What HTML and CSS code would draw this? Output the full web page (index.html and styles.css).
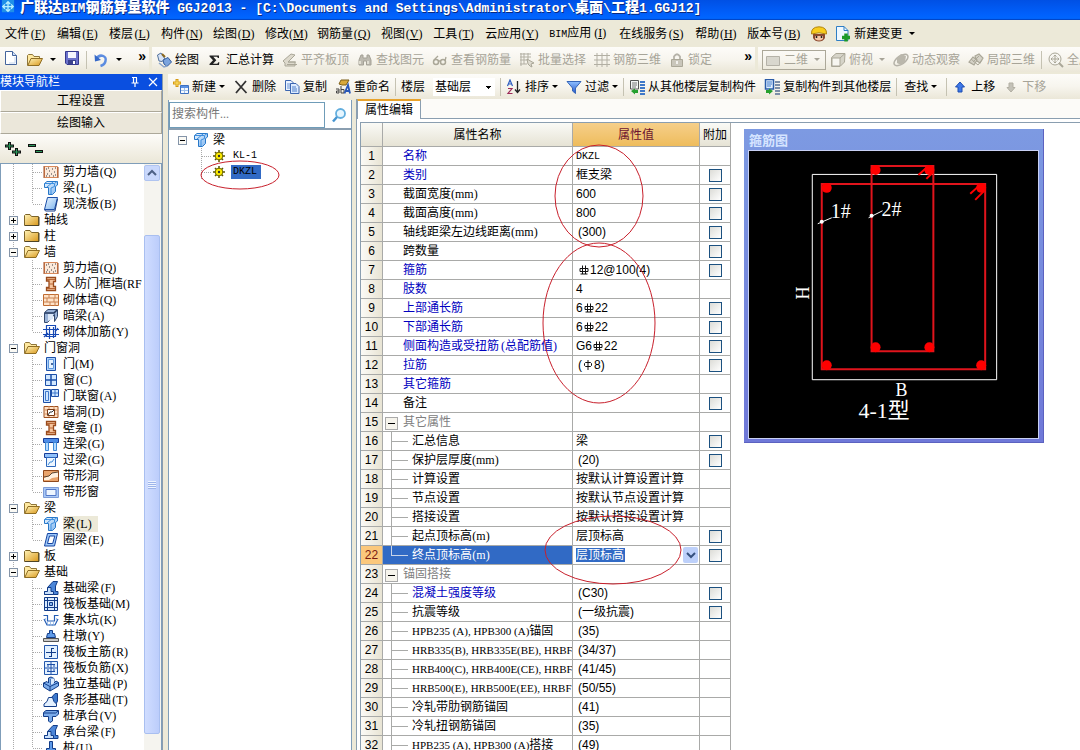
FILE: index.html
```html
<!DOCTYPE html>
<html lang="zh-CN">
<head>
<meta charset="utf-8">
<title>广联达BIM钢筋算量软件 GGJ2013</title>
<link rel="stylesheet" href="styles.css">
</head>
<body>
<svg class="defs" aria-hidden="true">
  <defs>
    <linearGradient id="gFold" x1="0" y1="0" x2="1" y2="1"><stop offset="0" stop-color="#fff3b8"/><stop offset="1" stop-color="#d9981c"/></linearGradient>
    <linearGradient id="gBlue" x1="0" y1="0" x2="1" y2="1"><stop offset="0" stop-color="#eaf5ff"/><stop offset="1" stop-color="#7db4ee"/></linearGradient>
    <linearGradient id="gDeep" x1="0" y1="0" x2="0" y2="1"><stop offset="0" stop-color="#8fc0ff"/><stop offset="1" stop-color="#2456c8"/></linearGradient>
  </defs>
  <symbol id="folder" viewBox="0 0 16 16"><path d="M.5 13.500V3.500L1.500 2.500H6L7.500 4.500H14.500V13.500Z" fill="url(#gFold)" stroke="#7d6428"/><path d="M1 13.500H15V5" fill="none" stroke="#4f4526"/></symbol>
  <symbol id="open" viewBox="0 0 16 16"><path d="M.5 13.500V3.500L1.500 2.500H5.500L7 4.500H12.500V6.500" fill="#ffe9a0" stroke="#8f763a"/><path d="M.8 13.500L4 6.500H15.500L12 13.500Z" fill="url(#gFold)" stroke="#8f6d22"/></symbol>
  <symbol id="wallQ" viewBox="0 0 16 16"><path d="M1.500 2.500H14.500V13.500H1.500Z" fill="#fbe9da" stroke="#d88a5c"/><path d="M1 2V14M15 3V14" stroke="#a04a20"/><path d="M3 5h1M6 7h1M9 5h1M11 8h1M4 10h1M8 10h1M12 11h1M6 12h1M3 12h1M10 12h1M5 4h1M12 4h1" stroke="#34343c"/></symbol>
  <symbol id="beam" viewBox="0 0 16 16"><path d="M1.500 3.500L4 1.500H14.500V5L12.500 6.500V11.500L9.500 14.500H5.500V7.500H1.500Z" fill="url(#gBlue)" stroke="#2878c8"/><path d="M1.500 3.500H11.500L14 1.500M11.500 4V6.500L8 8V14M4 7L10 2" fill="none" stroke="#3d8fe0"/></symbol>
  <symbol id="slab" viewBox="0 0 16 16"><path d="M4.500 1.500H14.500L11.500 13.500H1.500Z" fill="url(#gBlue)" stroke="#1c4fa8"/><path d="M1.500 13.500L2.500 15H12L14.500 3" fill="none" stroke="#173d88"/></symbol>
  <symbol id="ring" viewBox="0 0 16 16"><path d="M4.500 1.500H14.500L11.500 14H1.500Z" fill="#9cc8fa" stroke="#1644a0"/><path d="M6.500 4H11.800L9.700 11.500H4.500Z" fill="#fff" stroke="#1644a0"/></symbol>
  <symbol id="frameI" viewBox="0 0 16 16"><path d="M3.500 1.500H12.500V5.500H10.500V10.500H12.500V14.500H3.500V11.500H6V5H3.500Z" fill="#f6c49c" stroke="#9a4b1d" stroke-width="1.300"/><path d="M6 8h4M4 3.500h8M4 12.500h8" stroke="#b76534"/></symbol>
  <symbol id="brick" viewBox="0 0 16 16"><path d="M.5 2.500H15.500V13.500H.5Z" fill="#ffe3c8" stroke="#c06c32"/><path d="M1 6H15M1 10H15M6 2V6M11 6V10M4 6V10M7 10V14M12 2V6M12 10V14" stroke="#c98253"/></symbol>
  <symbol id="hidden" viewBox="0 0 16 16"><path d="M1.500 4.500L5 1.500H14.500V8.500L11.500 13.500V6.500L4.500 14.500H1.500Z" fill="#9ab3d8" stroke="#33486c"/><path d="M2 5H11L14 2" fill="none" stroke="#22375c" stroke-width="1.500"/><path d="M5 6H10V11L5 13Z" fill="#dce8f8"/></symbol>
  <symbol id="rebarY" viewBox="0 0 16 16"><path d="M3.500 1.500H12.500V12.500H3.500ZM0 5.500H16M0 10.500H16M6.500 3V15M10.500 3V14M1 13L5 9M12 8L15 4" fill="none" stroke="#1749b4" stroke-width="1.200"/></symbol>
  <symbol id="door" viewBox="0 0 16 16"><path d="M3.500 1.500H12.500V14.500H3.500Z" fill="#aed2fa" stroke="#1c4fa8"/><path d="M5.500 3.500H10.500V12.500H5.500Z" fill="#e4f2ff" stroke="#5e98de"/><path d="M9 7v2" stroke="#143c80" stroke-width="1.500"/></symbol>
  <symbol id="window" viewBox="0 0 16 16"><path d="M2.500 2.500H13.500V13.500H2.500Z" fill="#d2e8ff" stroke="#1c4fa8"/><path d="M8 3V13M3 8H13" stroke="#1c4fa8" stroke-width="1.500"/></symbol>
  <symbol id="doorwin" viewBox="0 0 16 16"><path d="M.5 1.500H7.500V14.500H.5ZM8.500 1.500H15.500V8.500H8.500Z" fill="#cfe6ff" stroke="#1c4fa8"/><path d="M12 2V8M9 5H15M2.500 3.500H5.500V12.500H2.500Z" fill="none" stroke="#3f78cc"/></symbol>
  <symbol id="hole" viewBox="0 0 16 16"><path d="M1 2.500H15V13.500H1Z" fill="#ffe0c4" stroke="#a0501e"/><path d="M1 6H15M1 10H15M6 2V13M11 2V13" stroke="#cf8f62"/><path d="M4.500 5.500H11.500V11.500H4.500Z" fill="#fff" stroke="#7a3a14"/><path d="M5 11L7 8L9 8L11 6" fill="none" stroke="#333"/></symbol>
  <symbol id="lianl" viewBox="0 0 16 16"><path d="M.5 2.500H15.500V6.500H.5Z" fill="#4d8de8" stroke="#173d98"/><path d="M2.500 6.500H5.500V14.500H2.500ZM10.500 6.500H13.500V14.500H10.500Z" fill="#b6dbff" stroke="#3f8bd8"/></symbol>
  <symbol id="guol" viewBox="0 0 16 16"><path d="M1.500 1.500H14.500V5.500H1.500Z" fill="#8fc0fa" stroke="#173d98"/><path d="M3.500 5.500H12.500V14.500H3.500Z" fill="#edf6ff" stroke="#2d68bc"/><path d="M5 13L7 10H9L11 7" fill="none" stroke="#3f8bd8"/></symbol>
  <symbol id="striphole" viewBox="0 0 16 16"><path d="M.5 2.500H15.500V13.500H.5Z" fill="#e9a46c" stroke="#8f481c"/><path d="M1 10L6 8L9 5L15 4V9L9 10L6 12H1Z" fill="#fff1e0"/><path d="M1 9L6 8L9 5L15 4" fill="none" stroke="#5c4632"/></symbol>
  <symbol id="stripwin" viewBox="0 0 16 16"><path d="M.5 3.500H15.500V13.500H.5Z" fill="#a9c9f7" stroke="#7d9cd8"/><path d="M3 5.500H13V11.500H3Z" fill="#eef6ff" stroke="#5277c8"/></symbol>
  <symbol id="foundF" viewBox="0 0 16 16"><path d="M1.500 14.500V11.500H4.500V7.500L10 1.500H14.500L12.500 6V11.500H15V14.500Z" fill="#4c86d8" stroke="#123c88"/><path d="M1.500 14.500V11.500H4.500V7.500H8V11.500H10.500V14.500Z" fill="#c8e0fc" stroke="#123c88"/></symbol>
  <symbol id="raft" viewBox="0 0 16 16"><path d="M1.500 1.500H14.500V14.500H1.500Z" fill="#d9ebff" stroke="#123c88"/><path d="M4.500 1V15M11.500 1V15M1 4.500H15M1 11.500H15" stroke="#123c88"/><path d="M6.500 6.500H9.500V9.500H6.500Z" fill="#86b7f2" stroke="#123c88"/></symbol>
  <symbol id="pit" viewBox="0 0 16 16"><path d="M.5 3.500H4.500V9H11.500V3.500H15.500M1 7L4 13H12L15 7" fill="none" stroke="#235cb4" stroke-width="1.200"/><path d="M4 11h1M7 11h1M10 11h1M2 7h1M13 7h1M6 13h1M9 13h1" stroke="#4f8fe0"/></symbol>
  <symbol id="pier" viewBox="0 0 16 16"><path d="M6.500 2.500H9.500V5.500H11.500L12.500 9.500H3.500L4.500 5.500H6.500Z" fill="#5f9be8" stroke="#123c88"/><path d="M.5 10.500H15.500V13.500H.5Z" fill="#c9c9c9" stroke="#555"/></symbol>
  <symbol id="barR" viewBox="0 0 16 16"><path d="M1.500 1.500H14.500V14.500H1.500Z" fill="#e3f1ff" stroke="#2558ac"/><path d="M8.500 4V12M3 8.500H13M8 4.500H11M6 12.500H9" fill="none" stroke="#123c88"/></symbol>
  <symbol id="barX" viewBox="0 0 16 16"><path d="M1.500 1.500H14.500V14.500H1.500Z" fill="#e3f1ff" stroke="#2558ac"/><path d="M8 2V14M2 8H14M4 4.500H12M4 11.500H12M5 4V7M11 4V7M5 9V12M11 9V12" stroke="#1c4fa8"/></symbol>
  <symbol id="solo" viewBox="0 0 16 16"><path d="M.5 7L4 5.500L5.500 7V2L8 1L11 2.500V7L13 5L15.500 6.500V10L7 15L.5 11Z" fill="#7aabea" stroke="#123c88"/><path d="M.5 7L7 10.500L15.500 6.500M7 10.500V15M8 3V9" fill="none" stroke="#123c88"/><path d="M8 3L11 2.500V7L8 9Z" fill="#dcecff"/></symbol>
  <symbol id="stripF" viewBox="0 0 16 16"><path d="M8 6L12 1.500H14.500V9L12 14Z" fill="#3c78cc" stroke="#123c88"/><path d="M1 14.500V12L4 9.500L5.500 5.500H9.500L11 9.500L13.500 12V14.500Z" fill="#e4f1ff" stroke="#123c88"/></symbol>
  <symbol id="cap" viewBox="0 0 16 16"><path d="M.5 4.500L3 2.500H15.500V6L13 8.500H9.500V13L7 14.500L5.500 13V8.500H.5Z" fill="#7aabea" stroke="#123c88"/><path d="M1 5H12.500L15 3" fill="none" stroke="#123c88"/></symbol>
  <symbol id="pile" viewBox="0 0 16 16"><path d="M6.500 1.500H9.500V8.500H12.500V12.500H3.500V8.500H6.500Z" fill="#5f9be8" stroke="#123c88"/><path d="M4 15h8" stroke="#123c88"/></symbol>
  <symbol id="gear" viewBox="0 0 12 12"><path d="M6 0V12M0 6H12M2 2L10 10M10 2L2 10" stroke="#5c5600" stroke-width="1.500"/><circle cx="6" cy="6" r="3.800" fill="#ffee00" stroke="#6d6600"/><circle cx="6" cy="6" r="1.200" fill="#333"/></symbol>
  <symbol id="new" viewBox="0 0 16 16"><path d="M2.500 1.500H9.500L13.500 5.500V14.500H2.500Z" fill="#fff" stroke="#44649c"/><path d="M9.500 1.500V5.500H13.500" fill="#cfe0f8" stroke="#44649c"/><path d="M12 7V13H6" fill="none" stroke="#c5d5ee"/></symbol>
  <symbol id="save" viewBox="0 0 16 16"><path d="M1.500 1.500H14.500V14.500H3L1.500 13Z" fill="#6c72cc" stroke="#34388e"/><path d="M4 2H12V8H4Z" fill="#f4f6ff"/><path d="M4 10H12V14H4Z" fill="#3c428e"/><path d="M9 11H11V14H9Z" fill="#fff"/></symbol>
  <symbol id="undo" viewBox="0 0 16 16"><path d="M3 7C7 1 14 4 12.500 9C12 12 9 13.500 7.500 14" fill="none" stroke="#5c8ce0" stroke-width="2.500"/><path d="M1.500 2.500L2 9.500L8 8Z" fill="#3568c8"/></symbol>
  <symbol id="paint" viewBox="0 0 16 16"><path d="M1.500 3L5 1L9 7L6 9.500L3 9Z" fill="#d8e4f6" stroke="#53729c"/><path d="M6 2L9 5" stroke="#8d681d" stroke-width="2"/><path d="M7 8L12 5.500L15.500 10L11 14.500L8 12Z" fill="#7ba4de" stroke="#355c9c"/><path d="M3 11L8 15L11 14" fill="none" stroke="#8ba5ca" stroke-width="1.500"/></symbol>
  <symbol id="sigma" viewBox="0 0 16 16"><path d="M2.500 3.500H12V6H11L10 4.800H6.300L9.300 8.300L6 11.700H10.300L11.300 10.300H12.300L12 13H2.500V12L6 8.300L2.500 4.500Z" fill="#222"/></symbol>
  <symbol id="level" viewBox="0 0 16 16"><path d="M1 9L9 2L13 3L6 10H13V14H3V11Z" fill="#ddd9cc" stroke="#aaa798"/><path d="M5 12.500H15M6 10H14" stroke="#aaa798"/></symbol>
  <symbol id="bino" viewBox="0 0 16 16"><path d="M2 13V8L4 3H6V6H10V3H12L14 8V13H9.500V9H6.500V13Z" fill="#bdbab0" stroke="#a4a196"/><path d="M3 9V12M11 9V12" stroke="#eceade" stroke-width="1.500"/></symbol>
  <symbol id="glass" viewBox="0 0 16 16"><circle cx="4" cy="10" r="2.500" fill="none" stroke="#aaa798" stroke-width="1.500"/><circle cx="11" cy="10" r="2.500" fill="none" stroke="#aaa798" stroke-width="1.500"/><path d="M6 9L9 9M2 8L6 4M13 9L14 5" stroke="#aaa798" stroke-width="1.300"/></symbol>
  <symbol id="grid" viewBox="0 0 16 16"><path d="M3 1V15M8 1V15M13 1V15M0 3.500H16M0 8H16M0 12.500H16" stroke="#b2afa3"/></symbol>
  <symbol id="batch" viewBox="0 0 16 16"><path d="M1 2H12M1 5H12M1 8H8M2 1V14M5 1V12M9 1V9M1 12H8" stroke="#b2afa3"/><path d="M8 7L15 11L12 12L13 15L11 14L9 12Z" fill="#dedbd0" stroke="#aaa798"/></symbol>
  <symbol id="lock" viewBox="0 0 16 16"><path d="M5 8V4.500Q8 0 11 4.500V8" fill="none" stroke="#b5b2a8" stroke-width="1.800"/><path d="M2.500 7.500H13.500V14.500H2.500Z" fill="#c9c6bb" stroke="#aaa798"/><path d="M8 9V12" stroke="#fff" stroke-width="1.500"/></symbol>
  <symbol id="flat" viewBox="0 0 16 16"><path d="M1.500 4.500H14.500V13.500H1.500Z" fill="#d9d7ce" stroke="#b5b2a8"/></symbol>
  <symbol id="cube" viewBox="0 0 16 16"><path d="M1.500 5.500L6 1.500H15L14.500 10L10 14.500H1.500Z" fill="#d6d4c9" stroke="#aaa798"/><path d="M2 6H10V14H2Z" fill="#f7f6f1" stroke="#aaa798"/><path d="M10 6L15 1.500" stroke="#aaa798"/></symbol>
  <symbol id="orbit" viewBox="0 0 16 16"><ellipse cx="8" cy="8" rx="8" ry="4" fill="none" stroke="#b5b2a8" stroke-width="1.500" transform="rotate(-35 8 8)"/><path d="M4 6L8 2L13 4L12 10L8 13L4 11Z" fill="#bab7ac"/></symbol>
  <symbol id="local" viewBox="0 0 16 16"><path d="M1 10L5 5L9 8L6 13ZM7 4L11 2L15 6L12 11L9 9Z" fill="#d5d2c7" stroke="#aaa798" stroke-width="1.200"/><path d="M3 7L10 13L14 8M5 10L11 4" stroke="#aaa798" fill="none"/></symbol>
  <symbol id="full" viewBox="0 0 16 16"><circle cx="7" cy="7" r="6" fill="#f7f6f1" stroke="#aaa798"/><path d="M7 3V11M3 7H11M5.500 4.500L7 3L8.500 4.500M5.500 9.500L7 11L8.500 9.500M4.500 5.500L3 7L4.500 8.500M9.500 5.500L11 7L9.500 8.500" stroke="#aaa798" fill="none"/><path d="M11 11L15 15" stroke="#aaa798" stroke-width="2"/></symbol>
  <symbol id="newitem" viewBox="0 0 16 16"><path d="M4 0V8M0 4H8" stroke="#d59a12" stroke-width="3"/><path d="M4 1V7M1 4H7" stroke="#ffe46a"/><path d="M7.500 6.500H15.500V14.500H7.500Z" fill="#f4f9ff" stroke="#3c70c0"/><path d="M8 8H15" stroke="#5a91e4" stroke-width="2"/><path d="M8 11.500H15M11.500 9V14" stroke="#9fc0ea"/></symbol>
  <symbol id="del" viewBox="0 0 16 16"><path d="M2.500 2L13.500 14M13 2L3 14" stroke="#333" stroke-width="1.800"/></symbol>
  <symbol id="copy" viewBox="0 0 16 16"><path d="M1.500 1.500H7L9.500 4V11.500H1.500Z" fill="#eaf3ff" stroke="#3c66b0"/><path d="M3 5H7M3 7H7M3 9H7" stroke="#6a94d4"/><path d="M6.500 4.500H12L15 7.500V14.500H6.500Z" fill="#dcebff" stroke="#3c66b0"/><path d="M8 8H12M8 10H13M8 12H13" stroke="#4f7fc8"/></symbol>
  <symbol id="rename" viewBox="0 0 16 16"><path d="M4 5L6 1H14L11 6H7Z" fill="#d9a93a" stroke="#7d5e18"/><path d="M1 10H4V14H1.500V12H4M6 7V14H9V10.500H6" fill="none" stroke="#444"/><path d="M9.500 14.500L13 6L15 14.500M11 12H15" fill="none" stroke="#2a58b8" stroke-width="1.800"/></symbol>
  <symbol id="sort" viewBox="0 0 16 16"><path d="M1.500 7L4 1L6.500 7M2.500 5H5.500" fill="none" stroke="#2c5cc0" stroke-width="1.200"/><path d="M2 9.500H6L2 14.500H6.500" fill="none" stroke="#9c2a58" stroke-width="1.200"/><path d="M11.500 2V13M9 10.500L11.500 13.500L14 10.500" fill="none" stroke="#222" stroke-width="1.300"/></symbol>
  <symbol id="filter" viewBox="0 0 16 16"><path d="M1 2.500H15L9.500 9V14.500L6.500 12V9Z" fill="url(#gDeep)" stroke="#3565b8"/></symbol>
  <symbol id="from" viewBox="0 0 16 16"><path d="M1.500 1.500H9.500V10H1.500Z" fill="#f5f5f5" stroke="#555"/><path d="M3 4H8M3 6H8M3 8H7" stroke="#777"/><path d="M2 12L6 9.500V11H9V14H6V15.500Z" fill="#26a02e"/><path d="M11 3H16M11 6H16M11 9H16M11 12H16M11 15H16" stroke="#3f78c8" stroke-width="2"/></symbol>
  <symbol id="to" viewBox="0 0 16 16"><path d="M1.500 .5H9.500V10H1.500Z" fill="#e2efff" stroke="#2b5ca8" stroke-width="1.500"/><path d="M3 3H8M3 5H8M3 7H7" stroke="#3f78c8"/><path d="M9 12L5 9.500V11H2V14H5V15.500Z" fill="#26a02e"/><path d="M11 3H16M11 6H16M11 9H16M11 12H16M11 15H16" stroke="#7c8ea8" stroke-width="2"/></symbol>
  <symbol id="up" viewBox="0 0 16 16"><path d="M8 3L12.500 8H10V13H6V8H3.500Z" fill="#3d78e8" stroke="#1c4cb0"/></symbol>
  <symbol id="down" viewBox="0 0 16 16"><path d="M8 13L12 8.500H10V4H6V8.500H4Z" fill="#c4c2b8" stroke="#b2afa3"/></symbol>
  <symbol id="face" viewBox="0 0 16 16"><path d="M2 8H14V12Q12 15.500 8 15.500Q4 15.500 2 12Z" fill="#8c4a30"/><path d="M4 10H12V13Q8 16 4 13Z" fill="#f5c8a8"/><path d="M5.500 10v2M10.500 10v2" stroke="#222" stroke-width="1.500"/><path d="M.5 8Q0 1 8 .8Q16 1 15.500 8Q8 5.500 .5 8Z" fill="#f8cc1c" stroke="#b08410"/></symbol>
  <symbol id="change" viewBox="0 0 16 16"><path d="M1.500 .5H9L13 4.500V14.500H1.500Z" fill="#eef8ff" stroke="#2e7ec4"/><path d="M9 .5V4.500H13" fill="none" stroke="#2e7ec4"/><path d="M11 7.500V15.500M7 11.500H15" stroke="#1d9a28" stroke-width="3.500"/></symbol>
  <symbol id="search" viewBox="0 0 16 16"><circle cx="9.500" cy="6.500" r="4.500" fill="#e6f6ff" stroke="#62aede" stroke-width="1.800"/><path d="M6 10L2 14.500" stroke="#4795d0" stroke-width="2.500"/></symbol>
  <symbol id="rb" viewBox="0 0 10 10"><path d="M1 3.500H9V6.500H1ZM3.500 .5V9M6.500 .5V9M1.500 9H8.500" fill="none" stroke="#111"/></symbol>
  <symbol id="pb" viewBox="0 0 10 10"><path d="M2.500 2.500H7.500L8.500 3.500V5.500L7.500 6.500H2.500L1.500 5.500V3.500ZM5 0V10" fill="none" stroke="#111"/></symbol>
</svg>

<div class="app">
  <header class="title"><svg class="logo" viewBox="0 0 16 16"><path d="M1 0H15V14H1Z" fill="#1f8fe8"/><path d="M8 2V13M2 7.500H14M5.500 4.500L8 2L10.500 4.500M4.500 5L2 7.500L4.500 10M11.500 5L14 7.500L11.500 10M5.500 10.500L8 13L10.500 10.500" fill="none" stroke="#b8f0ff" stroke-width="1.500"/></svg><h1><b>广联达</b>BIM<b>钢筋算量软件</b> GGJ2013 - [C:\Documents and Settings\Administrator\<b>桌面</b>\<b>工程</b>1.GGJ12]</h1></header>

  <nav class="menu">
    <button>文件<span class="k">(<u>F</u>)</span></button><button>编辑<span class="k">(<u>E</u>)</span></button><button>楼层<span class="k">(<u>L</u>)</span></button><button>构件<span class="k">(<u>N</u>)</span></button><button>绘图<span class="k">(<u>D</u>)</span></button><button>修改<span class="k">(<u>M</u>)</span></button><button>钢筋量<span class="k">(<u>Q</u>)</span></button><button>视图<span class="k">(<u>V</u>)</span></button><button>工具<span class="k">(<u>T</u>)</span></button><button>云应用<span class="k">(<u>Y</u>)</span></button><button><span class="m">BIM</span>应用<span class="k">(<u>I</u>)</span></button><button>在线服务<span class="k">(<u>S</u>)</span></button><button>帮助<span class="k">(<u>H</u>)</span></button><button>版本号<span class="k">(<u>B</u>)</span></button>
    <svg class="ic"><use href="#face"/></svg>
    <button class="tb change"><svg class="ic"><use href="#change"/></svg>新建变更<i class="ar"></i></button>
  </nav>

  <div class="bars">
    <div class="strip file">
      <button aria-label="新建"><svg class="ic"><use href="#new"/></svg></button>
      <button class="tb" aria-label="打开"><svg class="ic"><use href="#open"/></svg><i class="ar"></i></button>
      <button aria-label="保存"><svg class="ic"><use href="#save"/></svg></button>
      <i class="sep"></i>
      <button class="tb" aria-label="撤销"><svg class="ic"><use href="#undo"/></svg><i class="ar"></i></button>
      <b class="more">»</b>
    </div>
    <div class="strip draw">
      <button class="tb"><svg class="ic"><use href="#paint"/></svg>绘图</button>
      <button class="tb"><svg class="ic"><use href="#sigma"/></svg>汇总计算</button>
      <button class="tb" disabled><svg class="ic"><use href="#level"/></svg>平齐板顶</button>
      <button class="tb" disabled><svg class="ic"><use href="#bino"/></svg>查找图元</button>
      <button class="tb" disabled><svg class="ic"><use href="#glass"/></svg>查看钢筋量</button>
      <button class="tb" disabled><svg class="ic"><use href="#batch"/></svg>批量选择</button>
      <button class="tb" disabled><svg class="ic"><use href="#grid"/></svg>钢筋三维</button>
      <button class="tb" disabled><svg class="ic"><use href="#lock"/></svg>锁定</button>
      <b class="more">»</b>
    </div>
    <div class="strip view">
      <button class="tb dim" disabled><svg class="ic"><use href="#flat"/></svg>二维<i class="ar"></i></button>
      <button class="tb" disabled><svg class="ic"><use href="#cube"/></svg>俯视<i class="ar"></i></button>
      <button class="tb" disabled><svg class="ic"><use href="#orbit"/></svg>动态观察</button>
      <button class="tb" disabled><svg class="ic"><use href="#local"/></svg>局部三维</button>
      <i class="sep"></i>
      <button class="tb" disabled><svg class="ic"><use href="#full"/></svg>全屏</button>
    </div>
  </div>

  <div class="main">
    <aside class="side">
      <div class="sidehead"><span>模块导航栏</span><svg class="pin" viewBox="0 0 32 12"><path d="M4 1.500H9M5.500 2V7M8.500 2V7M3.500 7H10.500M7 7V11" fill="none" stroke="#fff" stroke-width="1.200"/><path d="M21 2L29 10M29 2L21 10" stroke="#fff" stroke-width="1.200"/></svg></div>
      <button class="mod">工程设置</button>
      <button class="mod">绘图输入</button>
      <div class="pm"><svg viewBox="0 0 48 20"><path d="M9.500 3V11M5 7H14M16.500 9V17M12 13H21M28 6.500H36M35 12.500H43" stroke="#111" stroke-width="3"/><path d="M9.500 4V10M6 7H13M16.500 10V16M13 13H20M29 6.500H35M36 12.500H42" stroke="#2a9a5a"/></svg></div>
      <div class="treebox">
        <ul class="tree">
          <li><ul>
            <li><svg class="ic"><use href="#wallQ"/></svg>剪力墙<span class="k">(Q)</span></li>
            <li><svg class="ic"><use href="#beam"/></svg>梁<span class="k">(L)</span></li>
            <li><svg class="ic"><use href="#slab"/></svg>现浇板<span class="k">(B)</span></li>
          </ul></li>
          <li><div class="fold"><i class="ex plus"></i><svg class="ic"><use href="#folder"/></svg>轴线</div></li>
          <li><div class="fold"><i class="ex plus"></i><svg class="ic"><use href="#folder"/></svg>柱</div></li>
          <li><div class="fold"><i class="ex"></i><svg class="ic"><use href="#open"/></svg>墙</div><ul>
            <li><svg class="ic"><use href="#wallQ"/></svg>剪力墙<span class="k">(Q)</span></li>
            <li><svg class="ic"><use href="#frameI"/></svg>人防门框墙<span class="k">(RF</span></li>
            <li><svg class="ic"><use href="#brick"/></svg>砌体墙<span class="k">(Q)</span></li>
            <li><svg class="ic"><use href="#hidden"/></svg>暗梁<span class="k">(A)</span></li>
            <li><svg class="ic"><use href="#rebarY"/></svg>砌体加筋<span class="k">(Y)</span></li>
          </ul></li>
          <li><div class="fold"><i class="ex"></i><svg class="ic"><use href="#open"/></svg>门窗洞</div><ul>
            <li><svg class="ic"><use href="#door"/></svg>门<span class="k">(M)</span></li>
            <li><svg class="ic"><use href="#window"/></svg>窗<span class="k">(C)</span></li>
            <li><svg class="ic"><use href="#doorwin"/></svg>门联窗<span class="k">(A)</span></li>
            <li><svg class="ic"><use href="#hole"/></svg>墙洞<span class="k">(D)</span></li>
            <li><svg class="ic"><use href="#frameI"/></svg>壁龛<span class="k">(I)</span></li>
            <li><svg class="ic"><use href="#lianl"/></svg>连梁<span class="k">(G)</span></li>
            <li><svg class="ic"><use href="#guol"/></svg>过梁<span class="k">(G)</span></li>
            <li><svg class="ic"><use href="#striphole"/></svg>带形洞</li>
            <li><svg class="ic"><use href="#stripwin"/></svg>带形窗</li>
          </ul></li>
          <li><div class="fold"><i class="ex"></i><svg class="ic"><use href="#open"/></svg>梁</div><ul>
            <li><svg class="ic"><use href="#beam"/></svg><span class="cur">梁<span class="k">(L)</span></span></li>
            <li><svg class="ic"><use href="#ring"/></svg>圈梁<span class="k">(E)</span></li>
          </ul></li>
          <li><div class="fold"><i class="ex plus"></i><svg class="ic"><use href="#folder"/></svg>板</div></li>
          <li><div class="fold"><i class="ex"></i><svg class="ic"><use href="#open"/></svg>基础</div><ul>
            <li><svg class="ic"><use href="#foundF"/></svg>基础梁<span class="k">(F)</span></li>
            <li><svg class="ic"><use href="#raft"/></svg>筏板基础<span class="k">(M)</span></li>
            <li><svg class="ic"><use href="#pit"/></svg>集水坑<span class="k">(K)</span></li>
            <li><svg class="ic"><use href="#pier"/></svg>柱墩<span class="k">(Y)</span></li>
            <li><svg class="ic"><use href="#barR"/></svg>筏板主筋<span class="k">(R)</span></li>
            <li><svg class="ic"><use href="#barX"/></svg>筏板负筋<span class="k">(X)</span></li>
            <li><svg class="ic"><use href="#solo"/></svg>独立基础<span class="k">(P)</span></li>
            <li><svg class="ic"><use href="#stripF"/></svg>条形基础<span class="k">(T)</span></li>
            <li><svg class="ic"><use href="#cap"/></svg>桩承台<span class="k">(V)</span></li>
            <li><svg class="ic"><use href="#foundF"/></svg>承台梁<span class="k">(F)</span></li>
            <li><svg class="ic"><use href="#pile"/></svg>桩<span class="k">(U)</span></li>
          </ul></li>
        </ul>
        <div class="scroll"><button class="sb" aria-label="向上滚动"><svg viewBox="0 0 10 10"><path d="M1 7L5 3L9 7" fill="none" stroke="#4d6185" stroke-width="2"/></svg></button><div class="thumb"><i></i></div></div>
      </div>
    </aside>

    <div class="work">
      <div class="strip edit">
        <button class="tb"><svg class="ic"><use href="#newitem"/></svg>新建<i class="ar"></i></button>
        <button class="tb"><svg class="ic"><use href="#del"/></svg>删除</button>
        <button class="tb"><svg class="ic"><use href="#copy"/></svg>复制</button>
        <button class="tb"><svg class="ic"><use href="#rename"/></svg>重命名</button>
        <i class="sep"></i>
        <label for="floor">楼层</label>
        <select id="floor"><option>基础层</option></select>
        <i class="sep"></i>
        <button class="tb"><svg class="ic"><use href="#sort"/></svg>排序<i class="ar"></i></button>
        <button class="tb"><svg class="ic"><use href="#filter"/></svg>过滤<i class="ar"></i></button>
        <i class="sep"></i>
        <button class="tb"><svg class="ic"><use href="#from"/></svg>从其他楼层复制构件</button>
        <button class="tb"><svg class="ic"><use href="#to"/></svg>复制构件到其他楼层</button>
        <i class="sep"></i>
        <button class="tb find-btn">查找<i class="ar"></i></button>
        <i class="sep"></i>
        <button class="tb"><svg class="ic"><use href="#up"/></svg>上移</button>
        <button class="tb" disabled><svg class="ic"><use href="#down"/></svg>下移</button>
      </div>
      <div class="panes">
        <section class="list">
          <div class="find"><input type="text" placeholder="搜索构件..." aria-label="搜索构件"><button aria-label="搜索"><svg class="ic"><use href="#search"/></svg></button></div>
          <ul class="comp">
            <li class="top"><i class="ex"></i><svg class="ic"><use href="#beam"/></svg>梁</li>
            <li><svg class="gear"><use href="#gear"/></svg><span class="m">KL-1</span></li>
            <li><svg class="gear"><use href="#gear"/></svg><span class="m on">DKZL</span></li>
          </ul>
        </section>
        <section class="props">
          <div class="tabs"><button class="tab">属性编辑</button></div>
          <div class="content">
            <table>
              <colgroup><col class="c1"><col class="c2"><col class="c3"><col class="c4"></colgroup>
              <thead><tr><th></th><th>属性名称</th><th class="hot">属性值</th><th>附加</th></tr></thead>
              <tbody>
                <tr><th>1</th><td class="b">名称</td><td><span class="m">DKZL</span></td><td></td></tr>
                <tr><th>2</th><td class="b">类别</td><td>框支梁</td><td><input type="checkbox" aria-label="附加 类别"></td></tr>
                <tr><th>3</th><td>截面宽度<span class="u">(mm)</span></td><td>600</td><td><input type="checkbox" aria-label="附加 截面宽度"></td></tr>
                <tr><th>4</th><td>截面高度<span class="u">(mm)</span></td><td>800</td><td><input type="checkbox" aria-label="附加 截面高度"></td></tr>
                <tr><th>5</th><td>轴线距梁左边线距离<span class="u">(mm)</span></td><td class="p">(300)</td><td><input type="checkbox" aria-label="附加 轴线距离"></td></tr>
                <tr><th>6</th><td>跨数量</td><td></td><td><input type="checkbox" aria-label="附加 跨数量"></td></tr>
                <tr><th>7</th><td class="b">箍筋</td><td class="p"><svg class="rb"><use href="#rb"/></svg>12@100(4)</td><td><input type="checkbox" aria-label="附加 箍筋"></td></tr>
                <tr><th>8</th><td class="b">肢数</td><td>4</td><td></td></tr>
                <tr><th>9</th><td class="b">上部通长筋</td><td>6<svg class="rb"><use href="#rb"/></svg>22</td><td><input type="checkbox" aria-label="附加 上部通长筋"></td></tr>
                <tr><th>10</th><td class="b">下部通长筋</td><td>6<svg class="rb"><use href="#rb"/></svg>22</td><td><input type="checkbox" aria-label="附加 下部通长筋"></td></tr>
                <tr><th>11</th><td class="b">侧面构造或受扭筋<span class="w">(</span>总配筋值)</td><td>G6<svg class="rb"><use href="#rb"/></svg>22</td><td><input type="checkbox" aria-label="附加 侧面筋"></td></tr>
                <tr><th>12</th><td class="b">拉筋</td><td class="p">(<svg class="rb"><use href="#pb"/></svg>8)</td><td><input type="checkbox" aria-label="附加 拉筋"></td></tr>
                <tr><th>13</th><td class="b">其它箍筋</td><td></td><td></td></tr>
                <tr><th>14</th><td>备注</td><td></td><td><input type="checkbox" aria-label="附加 备注"></td></tr>
                <tr><th>15</th><td class="g"><i class="box"></i>其它属性</td><td></td><td></td></tr>
                <tr><th>16</th><td class="s">汇总信息</td><td>梁</td><td><input type="checkbox" aria-label="附加 汇总信息"></td></tr>
                <tr><th>17</th><td class="s">保护层厚度<span class="u">(mm)</span></td><td class="p">(20)</td><td><input type="checkbox" aria-label="附加 保护层厚度"></td></tr>
                <tr><th>18</th><td class="s">计算设置</td><td>按默认计算设置计算</td><td></td></tr>
                <tr><th>19</th><td class="s">节点设置</td><td>按默认节点设置计算</td><td></td></tr>
                <tr><th>20</th><td class="s">搭接设置</td><td>按默认搭接设置计算</td><td></td></tr>
                <tr><th>21</th><td class="s">起点顶标高<span class="k">(m)</span></td><td>层顶标高</td><td><input type="checkbox" aria-label="附加 起点顶标高"></td></tr>
                <tr class="sel"><th>22</th><td class="s">终点顶标高<span class="k">(m)</span></td><td><div class="edit-cell"><input type="text" value="层顶标高" aria-label="终点顶标高"><button aria-label="展开"><svg viewBox="0 0 10 10"><path d="M1 3L5 7L9 3" fill="none" stroke="#35507e" stroke-width="2"/></svg></button></div></td><td><input type="checkbox" aria-label="附加 终点顶标高"></td></tr>
                <tr><th>23</th><td class="g"><i class="box"></i>锚固搭接</td><td></td><td></td></tr>
                <tr><th>24</th><td class="s b">混凝土强度等级</td><td class="p">(C30)</td><td><input type="checkbox" aria-label="附加 混凝土强度等级"></td></tr>
                <tr><th>25</th><td class="s">抗震等级</td><td class="p">(一级抗震)</td><td><input type="checkbox" aria-label="附加 抗震等级"></td></tr>
                <tr><th>26</th><td class="s"><span class="n">HPB235 (A), HPB300 (A)</span>锚固</td><td class="p">(35)</td><td></td></tr>
                <tr><th>27</th><td class="s"><span class="n">HRB335(B), HRB335E(BE), HRBF</span></td><td class="p">(34/37)</td><td></td></tr>
                <tr><th>28</th><td class="s"><span class="n">HRB400(C), HRB400E(CE), HRBF</span></td><td class="p">(41/45)</td><td></td></tr>
                <tr><th>29</th><td class="s"><span class="n">HRB500(E), HRB500E(EE), HRBF</span></td><td class="p">(50/55)</td><td></td></tr>
                <tr><th>30</th><td class="s">冷轧带肋钢筋锚固</td><td class="p">(41)</td><td></td></tr>
                <tr><th>31</th><td class="s">冷轧扭钢筋锚固</td><td class="p">(35)</td><td></td></tr>
                <tr><th>32</th><td class="s"><span class="n">HPB235 (A), HPB300 (A)</span>搭接</td><td class="p">(49)</td><td></td></tr>
              </tbody>
            </table>
            <figure class="pic">
              <figcaption>箍筋图</figcaption>
              <svg viewBox="0 0 290 288">
                <path d="M63.500 23.500H248.500V229.500H63.500Z" fill="none" stroke="#fff"/>
                <path d="M73 33H237V219H73ZM123 15H185V201H123Z" fill="none" stroke="#e0141c" stroke-width="2"/>
                <g fill="#f00"><circle cx="78" cy="37" r="5"/><circle cx="233" cy="37" r="5"/><circle cx="78" cy="215" r="5"/><circle cx="233" cy="215" r="5"/><circle cx="127" cy="19" r="5"/><circle cx="181" cy="19" r="5"/><circle cx="127" cy="197" r="5"/><circle cx="181" cy="197" r="5"/></g>
                <path d="M233 33L222 43M237 39L227 49M180 15L170 24M185 21L178 28" stroke="#f00" stroke-width="2"/>
                <path d="M69 73L83 67M120 67L134 60" stroke="#fff"/><circle cx="73" cy="71" r="2" fill="#fff"/><circle cx="123" cy="65" r="2" fill="#fff"/>
                <g class="lab"><text x="82" y="67">1#</text><text x="133" y="65">2#</text><text class="dimb" x="147" y="246">B</text><text class="dimb" transform="translate(60 143) rotate(-90)" x="-6" y="0">H</text><text class="big" x="110" y="268">4-1型</text></g>
              </svg>
            </figure>
          </div>
        </section>
      </div>
    </div>
  </div>
  <svg class="marks" viewBox="0 0 1080 750" aria-hidden="true"><g fill="none" stroke="#c8202c"><ellipse cx="240" cy="175" rx="39" ry="14"/><ellipse cx="599" cy="196" rx="44" ry="51"/><ellipse cx="599" cy="323" rx="56" ry="80"/><ellipse cx="613" cy="550" rx="68" ry="34"/></g></svg>
</div>
</body>
</html>
```
FILE: styles.css
```css
* { box-sizing: border-box; }
body {
  margin: 0;
  background: #ece9d8;
  color: #000;
  font: 12px/16px "Liberation Serif", "Noto Sans CJK SC", sans-serif;
}
button, input, select { font: inherit; color: inherit; margin: 0; padding: 0; }
button { border: 0; background: none; white-space: nowrap; }
ul { list-style: none; margin: 0; padding: 0; }
.defs { position: absolute; width: 0; height: 0; }
.app { position: relative; height: 100vh; display: flex; flex-direction: column; overflow: hidden; }
.ic { width: 16px; height: 16px; flex: none; }
.k { display: inline-block; width: 18px; text-align: center; white-space: nowrap; }
.u { display: inline-block; width: 26px; text-align: right; }
.w { display: inline-block; width: 6px; text-align: right; }
.m { font-family: "Liberation Mono", monospace; font-size: 10px; }
.n { font-size: 11px; }

.title {
  display: flex; align-items: flex-start; gap: 4px; height: 20px; flex: none; overflow: hidden;
  background: linear-gradient(#0050e4, #0060fc 70%, #0066ff 92%, #0038b0);
}
.logo { width: 16px; height: 14px; flex: none; }
.title h1 { margin: 0; color: #fff; white-space: pre; font: bold 13px/16px "Liberation Mono", "Noto Sans CJK SC", monospace; text-shadow: 1px 1px #0a2a80; }
.title b { font-size: 14px; }

.menu { display: flex; align-items: center; height: 27px; flex: none; padding-left: 5px; gap: 10px; background: #ece9d8; }
.change { margin-left: -2px; }
.tb { display: flex; align-items: center; gap: 3px; }
.ar { width: 0; height: 0; border: 3px solid transparent; border-top-color: #000; border-bottom: 0; }
.menu .ar { margin-left: 4px; }
.sep { width: 1px; height: 18px; background: #c5c2b2; flex: none; }
button:disabled { color: #a7a498; }
button:disabled .ar { border-top-color: #a7a498; }

.bars { display: flex; height: 27px; flex: none; gap: 3px; }
.strip {
  display: flex; align-items: center; gap: 8px; height: 25px; white-space: nowrap;
  background: linear-gradient(#fdfcf9, #f7f5ee 50%, #ebe7d8);
}
.file { width: 149px; padding-left: 3px; flex: none; }
.file .sep { margin: 0 -2px; }
.file .ar { margin-left: 4px; }
.draw { width: 603px; padding-left: 4px; flex: none; }
.draw .tb { flex: none; }
.more { margin-left: auto; padding-right: 3px; font: bold 14px/18px "Liberation Sans", sans-serif; align-self: flex-start; }
.view { flex: 1; padding-left: 4px; min-width: 0; overflow: hidden; }
.view .tb { flex: none; }
.view .ar { margin-left: 3px; }
.view .dim { border: 1px solid #aca899; height: 20px; padding: 0 5px 0 2px; margin-right: -4px; }
.view .sep { margin: 0 -2px; }

.main { display: flex; flex: 1; min-height: 0; }
.side { width: 163px; flex: none; display: flex; flex-direction: column; border-right: 1px solid #8a9cae; }
.sidehead { display: flex; justify-content: space-between; align-items: center; height: 16px; flex: none; background: #0a4fe0; color: #fff; }
.pin { width: 32px; height: 12px; margin-right: 2px; }
.mod { height: 22px; flex: none; border: 1px solid; border-color: #fff #aca899 #aca899 #fff; background: #ebe7da; }
.pm { height: 29px; flex: none; background: linear-gradient(#fdfcf9, #ebe7d8); }
.pm svg { width: 48px; height: 20px; margin: 0; display: block; position: relative; top: 5px; }
.treebox { flex: 1; min-height: 0; display: flex; overflow: hidden; background: #fff; border: 1px solid #7f9db9; border-width: 1px 1px 0; }
.tree { flex: 1; min-width: 0; overflow: hidden; white-space: nowrap; background: repeating-linear-gradient(#aaa 0 1px, #fff 1px 2px) 12px 0 / 1px 100% no-repeat; }
.tree ul { background: repeating-linear-gradient(#aaa 0 1px, #fff 1px 2px) 31px 0 / 1px calc(100% - 8px) no-repeat; }
.tree ul li, .fold { display: flex; align-items: center; height: 16px; gap: 4px; }
.tree ul li { padding-left: 42px; background: repeating-linear-gradient(90deg, #aaa 0 1px, #fff 1px 2px) 32px 8px / 10px 1px no-repeat; }
.tree ul .k { margin-left: -4px; }
.tree .cur .k { margin-left: 0; }
.cur { background: #ece9d8; padding-right: 5px; }
.fold { padding-left: 8px; }
.fold .ex { margin-right: 2px; }
.ex { position: relative; width: 9px; height: 9px; border: 1px solid #8494a8; background: #fbfaf5; flex: none; }
.ex::before, .plus::after { content: ""; position: absolute; left: 1px; top: 3px; width: 5px; height: 1px; background: #000; }
.plus::after { left: 3px; top: 1px; width: 1px; height: 5px; }
.scroll { width: 17px; flex: none; background: #f5f4ef; padding: 1px 1px 16px 0; display: flex; flex-direction: column; }
.sb { height: 16px; flex: none; border: 1px solid #b0c4f0; border-radius: 2px; background: #c9d8fc; display: grid; place-items: center; }
.sb svg { width: 10px; height: 10px; }
.thumb { flex: 1; margin-top: 54px; border: 1px solid #a9bff0; border-radius: 2px; background: linear-gradient(90deg, #d0ddff, #bccdfb); display: grid; place-items: center; }
.thumb i { width: 8px; height: 8px; background: repeating-linear-gradient(#eef4ff 0 1px, #9db4ea 1px 2px); }

.work { flex: 1; min-width: 0; margin-left: 5px; display: flex; flex-direction: column; }
.edit { flex: none; padding-left: 5px; }
.edit .tb, .edit label { flex: none; }
.edit .sep { margin: 0 -3px; }
.find-btn { padding: 0 4px 0 2px; }
#floor { appearance: none; border: 0; border-radius: 0; width: 62px; height: 18px; padding-left: 2px; flex: none; background: #fff conic-gradient(from 315deg at 50% 100%, #000 90deg, #fff 0) 52px 8px / 6px 3px no-repeat; }
.panes { flex: 1; min-height: 0; display: flex; }
.list { width: 184px; flex: none; border: 1px solid #7f9db9; border-width: 0 1px; background: #fff; margin-top: 1px; }
.find { display: flex; height: 30px; padding-top: 2px; border-bottom: 2px solid #8a9eb0; gap: 2px; }
.find input { flex: 1; min-width: 0; height: 26px; border: 1px solid #6f9cb8; padding: 0 2px 2px; background: #fff; }
.find input::placeholder { color: #777; }
.find button { width: 24px; display: grid; place-items: center; }
.comp { padding-top: 2px; }
.comp li { display: flex; align-items: center; height: 16px; padding-left: 44px; gap: 6px; background: repeating-linear-gradient(90deg, #aaa 0 1px, #fff 1px 2px) 33px 8px / 10px 1px no-repeat, repeating-linear-gradient(#aaa 0 1px, #fff 1px 2px) 32px 0 / 1px 100% no-repeat; }
.comp .top { padding-left: 9px; gap: 4px; background: none; }
.comp .top .ex { margin-right: 2px; }
.gear { width: 12px; height: 12px; }
.comp .m { padding: 0 4px 0 2px; line-height: 14px; }
.on { background: #316ac5; }

.props { flex: 1; min-width: 0; margin-left: 4px; background: #fff; border-left: 1px solid #8a9eb0; display: flex; flex-direction: column; }
.tabs { height: 20px; flex: none; background: #fcfbf8; border-bottom: 1px solid #8a9eb0; }
.tab { height: 20px; padding: 0 7px; background: #fff; border: 1px solid #8a9eb0; border-top: 2px solid #e8a32c; border-bottom: 0; }
.content { flex: 1; min-height: 0; overflow: hidden; display: flex; align-items: flex-start; gap: 13px; margin: 3px 0 0 3px; border: 1px solid #8a9eb0; border-width: 1px 0 0 1px; }
table { border-collapse: separate; border-spacing: 0; table-layout: fixed; width: 370px; flex: none; font-family: "Liberation Sans", "Noto Sans CJK SC", sans-serif; line-height: 16px; }
.c1 { width: 22px; } .c2 { width: 190px; } .c3 { width: 127px; } .c4 { width: 31px; }
th, td { height: 19px; padding: 0; border: 1px solid #a9aaa8; border-width: 0 1px 1px 0; font-weight: normal; white-space: nowrap; overflow: hidden; }
thead th { height: 24px; background: linear-gradient(#fafaf6, #e6e3d5); }
thead .hot { background: linear-gradient(#f6cf8a, #eebc5c); color: #6b1230; }
tbody th { background: linear-gradient(90deg, #fbfaf6, #e8e4d4); }
td:nth-child(2) { padding-left: 20px; font-family: "Liberation Serif", "Noto Sans CJK SC", sans-serif; }
td:nth-child(3) { padding-left: 3px; }
td:nth-child(3).p { padding-left: 5px; }
td:nth-child(4) { text-align: center; line-height: 0; }
.b { color: #0000c0; }
td.g:nth-child(2) { color: #808080; padding-left: 2px; }
td.s:nth-child(2) { padding-left: 29px; background: linear-gradient(#a9aaa8, #a9aaa8) 8px 0 / 1px 100% no-repeat, linear-gradient(#a9aaa8, #a9aaa8) 8px 9px / 17px 1px no-repeat; }
.box { position: relative; display: inline-block; vertical-align: middle; width: 13px; height: 13px; margin-right: 5px; border: 1px solid #aaa; background: #f6f4ec; }
.box::before { content: ""; position: absolute; left: 2px; top: 5px; width: 7px; height: 1px; background: #000; }
input[type="checkbox"] { appearance: none; width: 13px; height: 13px; border: 1px solid #1c5180; background: linear-gradient(135deg, #dcdcd7, #fff); }
.rb { width: 10px; height: 10px; vertical-align: -1px; margin: 0 1px; }
.sel th { background: #fbc87c; color: #7a1a10; }
.sel td.s:nth-child(2) { background: linear-gradient(#c8d4e8, #c8d4e8) 8px 0 / 1px 10px no-repeat, linear-gradient(#c8d4e8, #c8d4e8) 8px 9px / 17px 1px no-repeat, #316ac5; color: #fff; }
.edit-cell { display: flex; justify-content: space-between; align-items: center; height: 18px; }
.edit-cell input { width: 49px; height: 14px; border: 0; background: #316ac5; color: #fff; }
.edit-cell button { width: 15px; height: 16px; margin-right: 1px; border-radius: 2px; background: #bdd0fa; display: grid; place-items: center; }
.edit-cell svg { width: 10px; height: 10px; }

.pic { width: 300px; margin: 6px 0 0; padding: 0 5px 4px; background: linear-gradient(#7d9ae2, #6f78d8); border: 1px solid #5c62c0; border-width: 0 1px 1px 0; flex: none; }
.pic figcaption { height: 22px; padding-top: 4px; color: #d5e4ff; font-weight: bold; font-size: 13px; line-height: 16px; }
.pic > svg { display: block; width: 100%; background: #000; outline: 1px solid #c8d0f4; }
.lab { fill: #fff; font: 20px "Liberation Serif", "Noto Sans CJK SC", serif; }
.dimb { font-size: 18px; }
.big { font-size: 22px; }
.marks { position: absolute; left: 0; top: 0; width: 1080px; height: 750px; pointer-events: none; }
```
